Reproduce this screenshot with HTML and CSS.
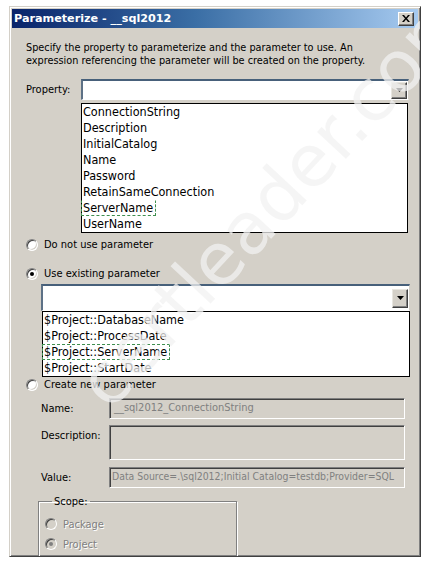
FILE: index.html
```html
<!DOCTYPE html>
<html>
<head>
<meta charset="utf-8">
<link rel="stylesheet" href="styles.css">
</head>
<body>
<div class="window">
  <div class="titlebar">
    <span class="title">Parameterize - __sql2012</span>
    <span class="close"><svg width="8" height="7" viewBox="0 0 8 7"><path d="M0 0h2l2 2.5L6 0h2L5 3.5 8 7H6L4 4.5 2 7H0l3-3.5z" fill="#000"/></svg></span>
  </div>
  <div class="content">
    <p class="intro">Specify the property to parameterize and the parameter to use. An<br>expression referencing the parameter will be created on the property.</p>

    <div class="prop-row">
      <span class="label prop-label">Property:</span>
      <div class="combo combo-prop">
        <span class="ddbtn"><svg width="7" height="4" viewBox="0 0 7 4"><path d="M0 0h7L3.5 4z" fill="#000"/></svg></span>
      </div>
    </div>
    <ul class="list list-prop">
      <li>ConnectionString</li>
      <li>Description</li>
      <li>InitialCatalog</li>
      <li>Name</li>
      <li>Password</li>
      <li>RetainSameConnection</li>
      <li><span class="mark mark1">ServerName</span></li>
      <li>UserName</li>
    </ul>

    <div class="radio-row r1"><span class="radio"></span><span>Do not use parameter</span></div>
    <div class="radio-row r2"><span class="radio checked"></span><span>Use existing parameter</span></div>

    <div class="combo combo-param">
      <span class="ddbtn"><svg width="7" height="4" viewBox="0 0 7 4"><path d="M0 0h7L3.5 4z" fill="#000"/></svg></span>
    </div>
    <ul class="list list-param">
      <li>$Project::DatabaseName</li>
      <li>$Project::ProcessDate</li>
      <li><span class="mark mark2">$Project::ServerName</span></li>
      <li>$Project::StartDate</li>
    </ul>

    <div class="radio-row r3"><span class="radio"></span><span>Create new parameter</span></div>

    <div class="field-row name-row">
      <span class="label flabel">Name:</span>
      <div class="tbox">__sql2012_ConnectionString</div>
    </div>
    <div class="field-row desc-row">
      <span class="label flabel">Description:</span>
      <div class="tbox tall"></div>
    </div>
    <div class="field-row value-row">
      <span class="label flabel">Value:</span>
      <div class="tbox tval">Data Source=.\sql2012;Initial Catalog=testdb;Provider=SQL</div>
    </div>

    <fieldset class="scope">
      <legend>Scope:</legend>
      <div class="radio-row dis"><span class="radio off"></span><span>Package</span></div>
      <div class="radio-row dis"><span class="radio off checked"></span><span>Project</span></div>
    </fieldset>
  </div>
  <div class="watermark">certleader.com</div>
</div>
</body>
</html>
```

FILE: styles.css
```css
html, body {
  margin: 0;
  padding: 0;
  background: #ffffff;
}
body {
  font-family: "DejaVu Sans Condensed", "Liberation Sans", sans-serif;
  font-size: 11px;
  color: #000;
}
.window {
  position: relative;
  box-sizing: border-box;
  margin: 6px 0 0 9px;
  width: 412px;
  height: 551px;
  padding: 2px;
  background: #d4d0c8;
  border: 1px solid;
  border-color: #d4d0c8 #404040 #404040 #d4d0c8;
  box-shadow: inset 1px 1px 0 #ffffff, inset -1px -1px 0 #808080;
  overflow: hidden;
}
.titlebar {
  height: 19px;
  display: flex;
  align-items: center;
  justify-content: space-between;
  background: linear-gradient(to right, #0a246a 0%, #3a6ea5 45%, #a6caf0 100%);
  color: #fff;
  padding: 0 4px 0 2px;
}
.title {
  font-family: "DejaVu Sans", "Liberation Sans", sans-serif;
  font-weight: bold;
  font-size: 11.2px;
}
.close {
  box-sizing: border-box;
  width: 16px;
  height: 14px;
  display: flex;
  align-items: center;
  justify-content: center;
  background: #d4d0c8;
  border: 1px solid;
  border-color: #ffffff #404040 #404040 #ffffff;
  box-shadow: inset -1px -1px 0 #808080;
}
.content {
  position: relative;
  padding-left: 14px;
}
.intro {
  margin: 13px 0 0 0;
  font-size: 10.8px;
  line-height: 13px;
  white-space: nowrap;
}
.label { white-space: nowrap; }
.prop-row {
  display: flex;
  align-items: center;
  margin-top: 12px;
  height: 21px;
}
.prop-label {
  width: 55px;
}
.combo {
  box-sizing: border-box;
  position: relative;
  background: #fff;
  border-top: 2px solid #47607a;
  border-left: 2px solid #5d7186;
  border-right: 1px solid #d4d0c8;
  border-bottom: 1px solid #ffffff;
  display: flex;
  align-items: center;
  justify-content: flex-end;
  padding-right: 1px;
}
.combo-prop {
  width: 328px;
  height: 21px;
}
.combo-param {
  margin: 4px 0 0 15px;
  width: 369px;
  height: 27px;
}
.ddbtn {
  box-sizing: border-box;
  width: 16px;
  height: 17px;
  display: flex;
  align-items: center;
  justify-content: center;
  background: #d4d0c8;
  border: 1px solid;
  border-color: #e8e6e0 #404040 #404040 #e8e6e0;
  box-shadow: inset -1px -1px 0 #808080;
}
.combo-param .ddbtn { height: 19px; }
.list {
  list-style: none;
  margin: 0;
  padding: 0;
  background: #fff;
  border: 1px solid #000;
  box-sizing: border-box;
  font-family: "DejaVu Sans Condensed", "Liberation Sans", sans-serif;
  font-size: 12.5px;
}
.list li {
  height: 16px;
  line-height: 16px;
  padding-left: 1px;
  white-space: nowrap;
}
.list-prop {
  margin: 3px 0 0 55px;
  width: 327px;
  height: 130px;
}
.list-param {
  margin: 0 0 0 16px;
  width: 368px;
  height: 66px;
}
.mark {
  display: inline-block;
  line-height: 14px;
  padding: 0 2px 0 1px;
  margin-left: -2px;
  border: 1.5px dashed #3f8f4f;
}
.mark1 { border-top-color: transparent; }
.radio-row {
  display: flex;
  align-items: center;
  height: 13px;
  gap: 6px;
}
.radio {
  box-sizing: border-box;
  width: 12px;
  height: 12px;
  border-radius: 50%;
  background: #fff;
  border: 1px solid;
  border-color: #808080 #ffffff #ffffff #808080;
  box-shadow: inset 1px 1px 0 #404040, inset -1px -1px 0 #d4d0c8;
  display: flex;
  align-items: center;
  justify-content: center;
}
.radio.checked::after {
  content: "";
  width: 4px;
  height: 4px;
  border-radius: 50%;
  background: #000;
}
.radio.off { background: #d4d0c8; }
.radio.off.checked::after { background: #808080; }
.r1 { margin-top: 5px; }
.r2 { margin-top: 16px; }
.r3 { margin-top: 1px; }
.dis { color: #808080; text-shadow: 1px 1px 0 #ffffff; }
.field-row {
  display: flex;
  margin-left: 15px;
}
.flabel {
  width: 68px;
}
.name-row { margin-top: 7px; align-items: center; }
.desc-row { margin-top: 6px; align-items: flex-start; }
.desc-row .flabel { margin-top: 4px; }
.value-row { margin-top: 7px; align-items: center; }
.tbox {
  box-sizing: border-box;
  width: 296px;
  height: 21px;
  line-height: 17px;
  padding-left: 4px;
  color: #808080;
  background: #d4d0c8;
  border: 1px solid;
  border-color: #808080 #ffffff #ffffff #808080;
  box-shadow: inset 1px 1px 0 #404040, inset -1px -1px 0 #d4d0c8;
  white-space: nowrap;
  overflow: hidden;
}
.tval {
  font-size: 10.4px;
  padding-left: 2px;
}
.tall { height: 35px; }
.scope {
  margin: 7px 0 0 12px;
  padding: 6px 0 20px 6px;
  width: 199px;
  box-sizing: border-box;
  border: 1px solid #808080;
  box-shadow: 1px 1px 0 #ffffff, inset 1px 1px 0 #ffffff;
  height: 80px;
}
.scope legend {
  padding: 0 2px;
  margin-left: 7px;
}
.scope .radio-row { height: 20px; }
.watermark {
  position: absolute;
  left: 8px;
  top: 178px;
  width: 460px;
  font-family: "DejaVu Sans", "Liberation Sans", sans-serif;
  font-size: 72px;
  font-weight: normal;
  color: rgba(242, 242, 242, 0.75);
  transform: rotate(-47deg);
  transform-origin: center;
  white-space: nowrap;
  pointer-events: none;
}
```
